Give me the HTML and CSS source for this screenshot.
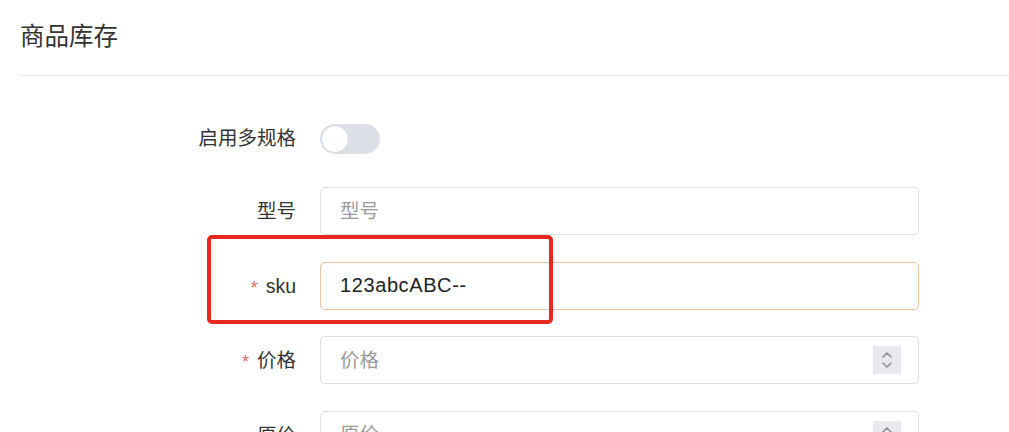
FILE: index.html
```html
<!DOCTYPE html>
<html lang="zh-CN">
<head>
<meta charset="utf-8">
<title>商品库存</title>
<link rel="stylesheet" href="styles.css">
</head>
<body>
<div class="page">
  <div class="header"><h1 class="title">商品库存</h1></div>
  <form class="form">
    <div class="row row-switch">
      <label class="label">启用多规格</label>
      <div class="control">
        <span class="switch"><span class="knob"></span></span>
      </div>
    </div>
    <div class="row">
      <label class="label">型号</label>
      <div class="control">
        <input class="input" type="text" placeholder="型号">
      </div>
    </div>
    <div class="row row-sku">
      <label class="label"><span class="req">*</span>sku</label>
      <div class="control">
        <input class="input input-warn" type="text" value="123abcABC--">
      </div>
      <div class="highlight"></div>
    </div>
    <div class="row">
      <label class="label"><span class="req">*</span>价格</label>
      <div class="control">
        <input class="input" type="text" placeholder="价格">
        <span class="spin">
          <svg width="12" height="20" viewBox="0 0 12 20"><path d="M2 7 L6 3 L10 7" fill="none" stroke="#8f8f99" stroke-width="1.6" stroke-linecap="round" stroke-linejoin="round"/><path d="M2 13 L6 17 L10 13" fill="none" stroke="#8f8f99" stroke-width="1.6" stroke-linecap="round" stroke-linejoin="round"/></svg>
        </span>
      </div>
    </div>
    <div class="row">
      <label class="label">原价</label>
      <div class="control">
        <input class="input" type="text" placeholder="原价">
        <span class="spin">
          <svg width="12" height="20" viewBox="0 0 12 20"><path d="M2 7 L6 3 L10 7" fill="none" stroke="#8f8f99" stroke-width="1.6" stroke-linecap="round" stroke-linejoin="round"/><path d="M2 13 L6 17 L10 13" fill="none" stroke="#8f8f99" stroke-width="1.6" stroke-linecap="round" stroke-linejoin="round"/></svg>
        </span>
      </div>
    </div>
  </form>
</div>
</body>
</html>
```
FILE: styles.css
```css
* { box-sizing: border-box; }
html, body { margin: 0; padding: 0; background: #fff; }
body {
  font-family: "Liberation Sans", "Noto Sans CJK SC", sans-serif;
  color: #333;
  overflow: hidden;
  height: 432px;
}
.page { padding-left: 20px; }
.header {
  height: 76px;
  border-bottom: 1px solid #e6e6e6;
}
.title {
  margin: 0;
  font-size: 24.5px;
  font-weight: 400;
  line-height: 74px;
  color: #333;
}
.form {
  padding-top: 39px;
  margin-right: 90px;
}
.row {
  display: grid;
  grid-template-columns: 276px 1fr;
  column-gap: 24px;
  align-items: center;
  height: 48px;
  margin-bottom: 26.5px;
}
.row-switch { margin-bottom: 24px; }
.row-sku { position: relative; }
.label {
  text-align: right;
  font-size: 19.5px;
  line-height: 1.2;
  color: #333;
  white-space: nowrap;
  position: relative;
  top: 1px;
}
.row-switch .label { top: 0; }
.req {
  color: #e36b6b;
  font-size: 18px;
  margin-right: 8px;
  position: relative;
  top: 1px;
}
.control {
  position: relative;
  height: 100%;
  display: flex;
  align-items: center;
}
.switch {
  position: relative;
  display: inline-block;
  width: 60px;
  height: 30px;
  border-radius: 15px;
  background: #dcdfe6;
}
.knob {
  position: absolute;
  left: 2px;
  top: 2px;
  width: 26px;
  height: 26px;
  border-radius: 50%;
  background: #fff;
  box-shadow: 0 0 1px rgba(0,0,0,0.15);
}
.input {
  width: 100%;
  height: 48px;
  border: 1px solid #dedfe3;
  border-radius: 5px;
  padding: 0 19px;
  font-family: "Liberation Sans", "Noto Sans CJK SC", sans-serif;
  font-size: 19.5px;
  color: #333;
  background: #fff;
  outline: none;
}
.input::placeholder { color: #9a9a9a; }
.input-warn {
  border-color: #ecc2a4;
  font-size: 20px;
  letter-spacing: 0.6px;
  color: #222;
}
.spin {
  position: absolute;
  right: 18px;
  top: 50%;
  margin-top: -14px;
  width: 28px;
  height: 28px;
  background: #e9e9ee;
  display: flex;
  align-items: center;
  justify-content: center;
}
.highlight {
  position: absolute;
  left: 187px;
  top: -27px;
  width: 346px;
  height: 89px;
  border: 4px solid #e8281e;
  border-radius: 5px;
  pointer-events: none;
}
```
